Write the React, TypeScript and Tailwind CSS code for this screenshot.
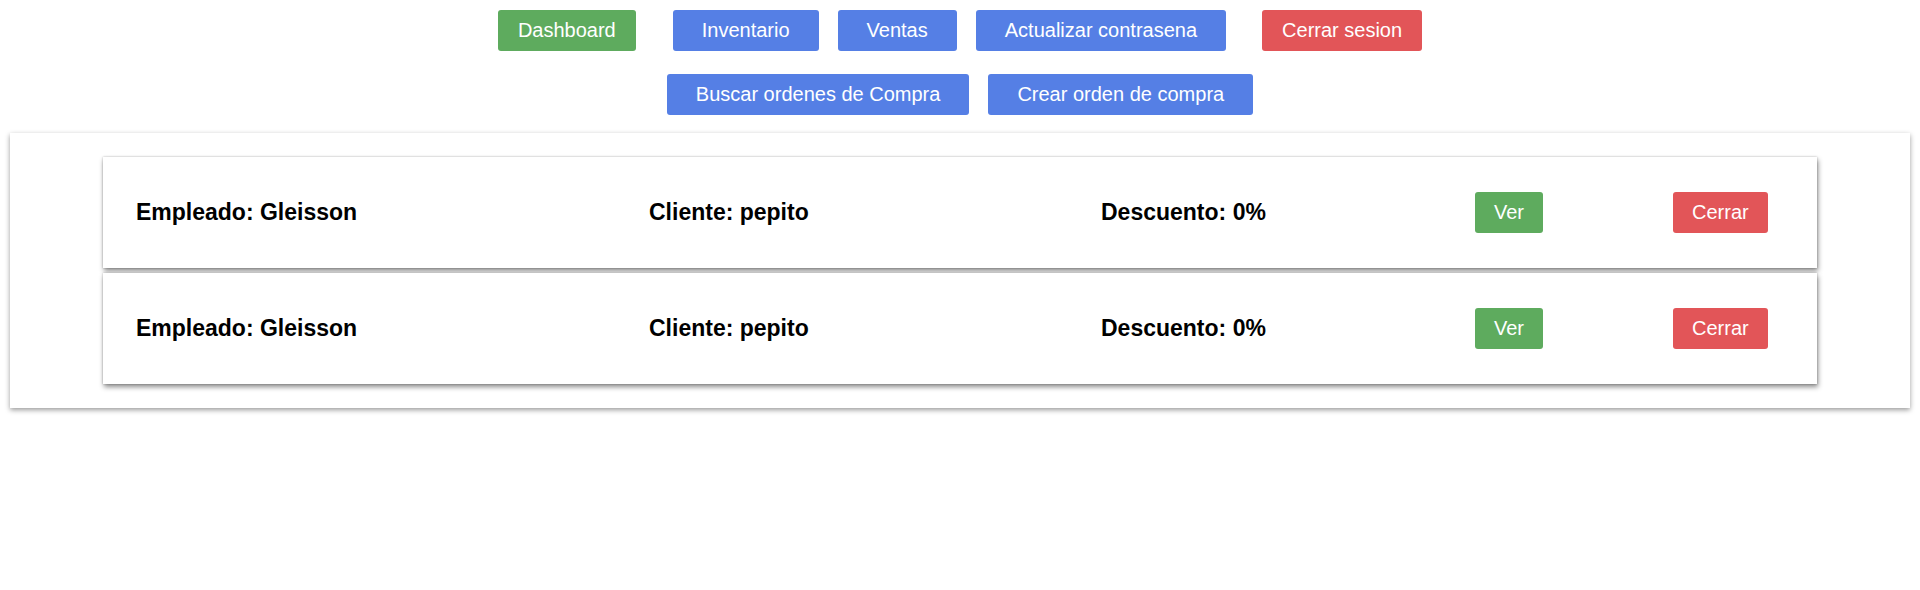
import React from "react";

type Orden = {
  empleado: string;
  cliente: string;
  descuento: number;
};

const ordenes: Orden[] = [
  { empleado: "Gleisson", cliente: "pepito", descuento: 0 },
  { empleado: "Gleisson", cliente: "pepito", descuento: 0 },
];

const btn =
  "h-[41px] rounded-[3px] text-[20px] leading-[23px] text-white whitespace-nowrap";

const App: React.FC = () => {
  return (
    <div
      className="min-h-[590px] bg-white text-black"
      style={{ fontFamily: '"Liberation Sans", Arial, sans-serif' }}
    >
      {/* Navegacion */}
      <nav className="flex flex-col items-center gap-[23px] pt-[10px] pb-[18px]">
        <div className="flex items-center gap-[19px]">
          <button className={`${btn} px-[20px] bg-[#5eab5e] mr-[18px]`}>Dashboard</button>
          <button className={`${btn} px-[29px] bg-[#557fe5]`}>Inventario</button>
          <button className={`${btn} px-[29px] bg-[#557fe5]`}>Ventas</button>
          <button className={`${btn} px-[29px] bg-[#557fe5]`}>Actualizar contrasena</button>
          <button className={`${btn} px-[20px] bg-[#e25558] ml-[17px]`}>Cerrar sesion</button>
        </div>
        <div className="flex items-center gap-[19px]">
          <button className={`${btn} px-[29px] bg-[#557fe5]`}>Buscar ordenes de Compra</button>
          <button className={`${btn} px-[29px] bg-[#557fe5]`}>Crear orden de compra</button>
        </div>
      </nav>

      {/* Lista de ordenes */}
      <section className="mx-[10px] py-[24px] bg-white shadow-[0_2px_5px_rgba(0,0,0,0.4)] flex flex-col gap-[5px]">
        {ordenes.map((orden, index) => (
          <div
            key={index}
            className="mx-[93px] py-[35px] pl-[33px] bg-white flex items-center shadow-[0_0_2px_rgba(0,0,0,0.25),1px_3px_5px_rgba(0,0,0,0.45)]"
          >
            <h3 className="w-[513px] text-[23px] font-bold leading-[27px]">
              Empleado: {orden.empleado}
            </h3>
            <h3 className="w-[452px] text-[23px] font-bold leading-[27px]">
              Cliente: {orden.cliente}
            </h3>
            <h3 className="w-[374px] text-[23px] font-bold leading-[27px]">
              Descuento: {orden.descuento}%
            </h3>
            <div className="w-[198px]">
              <button className={`${btn} px-[19px] bg-[#5eab5e]`}>Ver</button>
            </div>
            <div>
              <button className={`${btn} px-[19px] bg-[#e25558]`}>Cerrar</button>
            </div>
          </div>
        ))}
      </section>
    </div>
  );
};

export default App;
